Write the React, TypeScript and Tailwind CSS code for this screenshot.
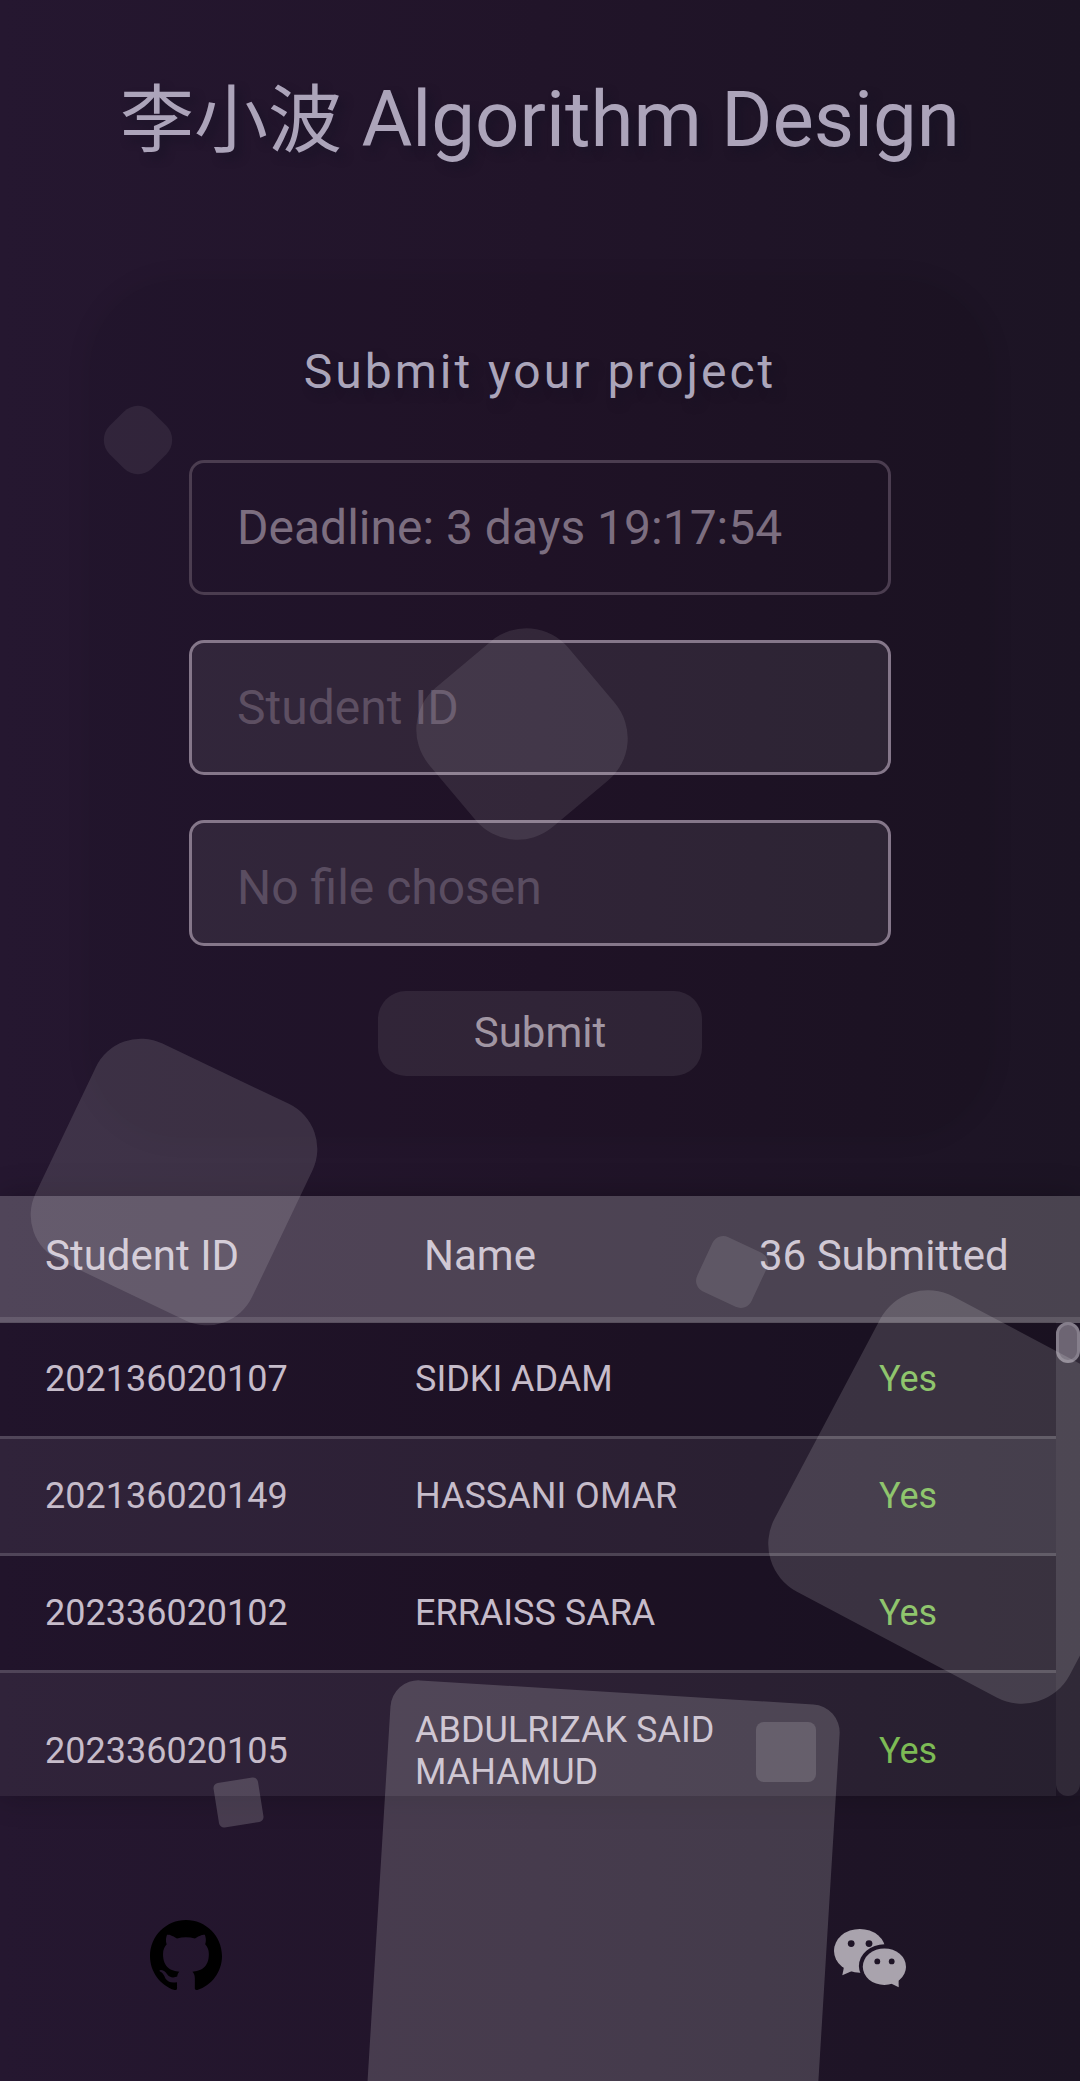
import { SiGithub } from "react-icons/si";

const rows = [
  { id: "202136020107", name: "SIDKI ADAM" },
  { id: "202136020149", name: "HASSANI OMAR" },
  { id: "202336020102", name: "ERRAISS SARA" },
  { id: "202336020105", name: "ABDULRIZAK SAID MAHAMUD" },
];

const squares = [
  "left-[108px] top-[410px] size-[60px] rotate-45 rounded-[20px] bg-white/7",
  "left-[431px] top-[643px] size-[182px] rotate-[50deg] rounded-[55px] bg-white/9",
  "left-[54px] top-[1062px] size-[240px] rotate-[25.5deg] rounded-[50px] bg-white/12",
  "left-[702px] top-[1242px] size-[60px] rotate-[25deg] rounded-[12px] bg-white/11",
  "left-[808px] top-[1330px] size-[334px] rotate-[27.9deg] rounded-[54px] bg-white/14",
  "left-[378px] top-[1692px] size-[450px] rotate-[3.5deg] rounded-[28px] bg-white/17",
  "left-[756px] top-[1722px] size-[60px] rounded-[8px] bg-white/14",
  "left-[216px] top-[1780px] size-[45px] rotate-[-9deg] rounded-[5px] bg-white/17",
];

function Squares() {
  return (
    <div className="pointer-events-none absolute inset-0 overflow-hidden">
      {squares.map((cls) => (
        <span key={cls} className={`absolute block ${cls}`} />
      ))}
    </div>
  );
}

function WechatIcon({ className }: { className?: string }) {
  return (
    <svg viewBox="14 9 72 72" fill="currentColor" className={className}>
      <mask id="back-bubble">
        <rect x="0" y="0" width="100" height="90" fill="white" />
        <ellipse cx="64.5" cy="51" rx="25.6" ry="21.7" fill="black" />
        <circle cx="31.2" cy="28.6" r="3.4" fill="black" />
        <circle cx="49" cy="28.6" r="3.4" fill="black" />
      </mask>
      <mask id="front-bubble">
        <rect x="0" y="0" width="100" height="90" fill="white" />
        <circle cx="57.3" cy="46.4" r="2.9" fill="black" />
        <circle cx="71.7" cy="46.4" r="2.9" fill="black" />
      </mask>
      <g mask="url(#back-bubble)">
        <ellipse cx="39.8" cy="35.8" rx="25.8" ry="21.9" />
        <path d="M24.4 50 L22.3 60.3 L31.5 56.2 Z" />
      </g>
      <g mask="url(#front-bubble)">
        <ellipse cx="64.4" cy="51.7" rx="21.6" ry="18.3" />
        <path d="M78.6 64 L78.7 72.3 L71 68.6 Z" />
      </g>
    </svg>
  );
}

function SubmitCard() {
  return (
    <form className="mx-auto mt-[60px] flex h-[857px] w-[900px] flex-col items-center rounded-[90px] bg-black/6 shadow-[0_0_24px_rgba(0,0,0,0.1)]">
      <h2 className="mt-[64px] text-[48px] leading-[56px] tracking-[3px] text-[#aba5ba] [text-shadow:6px_6px_9px_#15122480]">
        Submit your project
      </h2>
      <div className="mt-[60px] flex h-[135px] w-[702px] items-center rounded-[15px] border-3 border-[#4b3d50] pl-[45px] text-[48px] text-[#7c6e80]">
        Deadline: 3 days 19:17:54
      </div>
      <input
        placeholder="Student ID"
        className="mt-[45px] h-[135px] w-[702px] rounded-[15px] border-3 border-[#85778a] bg-white/8 pl-[45px] text-[48px] placeholder:text-[#5d4f62] placeholder:opacity-100"
      />
      <div className="mt-[45px] flex h-[126px] w-[702px] items-center rounded-[15px] border-3 border-[#85778a] bg-white/8 pt-[10px] pl-[45px] text-[48px] text-[#5a4d61]">
        No file chosen
      </div>
      <button
        type="button"
        className="mt-[45px] h-[85px] w-[324px] rounded-[28px] bg-white/8 pb-[2px] text-[42px] text-[#a196a3]"
      >
        Submit
      </button>
    </form>
  );
}

function Submissions() {
  return (
    <section className="mt-[59px] h-[600px] shadow-[0_0_30px_rgba(0,0,0,0.24)]">
      <header className="flex h-[127px] items-center border-b-6 border-white/12 bg-white/20 pb-[2px] text-[42px] text-[#d0c8d4]">
        <span className="w-[424px] pl-[45px]">Student ID</span>
        <span className="w-[335px]">Name</span>
        <span>36 Submitted</span>
      </header>
      <div className="-mt-px flex h-[474px] overflow-hidden">
        <div className="w-[1056px]">
          {rows.map((r) => (
            <div
              key={r.id}
              className="flex items-center border-b-3 border-white/20 bg-clip-padding py-9 text-[36px] leading-[42px] text-[#c6bcca] odd:bg-black/10 even:bg-white/5"
            >
              <span className="w-[415px] pl-[45px]">{r.id}</span>
              <span className="w-[345px] pr-4">{r.name}</span>
              <span className="w-[296px] text-center text-[#7dbb55]">Yes</span>
            </div>
          ))}
        </div>
        <div className="h-full w-6 rounded-full bg-white/9">
          <div className="h-[41px] w-6 rounded-full border-3 border-[#857e8b] bg-[#6d6573]" />
        </div>
      </div>
    </section>
  );
}

export default function App() {
  return (
    <div className="relative h-[2081px] w-[1080px] overflow-hidden bg-linear-to-r from-[#251730] via-[#211429] to-[#1c1424] font-['Roboto','Noto_Sans_CJK_SC',sans-serif]">
      <h1 className="flex h-[220px] items-baseline justify-center pt-[72px] text-[78px] leading-[96px] whitespace-pre text-[#aca4ba] [text-shadow:6px_6px_9px_#15122499]">
        <span className="text-[74px]">李小波</span>
        <span> Algorithm Design</span>
      </h1>
      <SubmitCard />
      <Submissions />
      <footer className="flex pt-[123px]">
        <SiGithub className="ml-[150px] size-[72px] text-black" />
        <WechatIcon className="mt-[5px] ml-[612px] size-[72px] text-[#a9a3ad]" />
      </footer>
      <Squares />
    </div>
  );
}
